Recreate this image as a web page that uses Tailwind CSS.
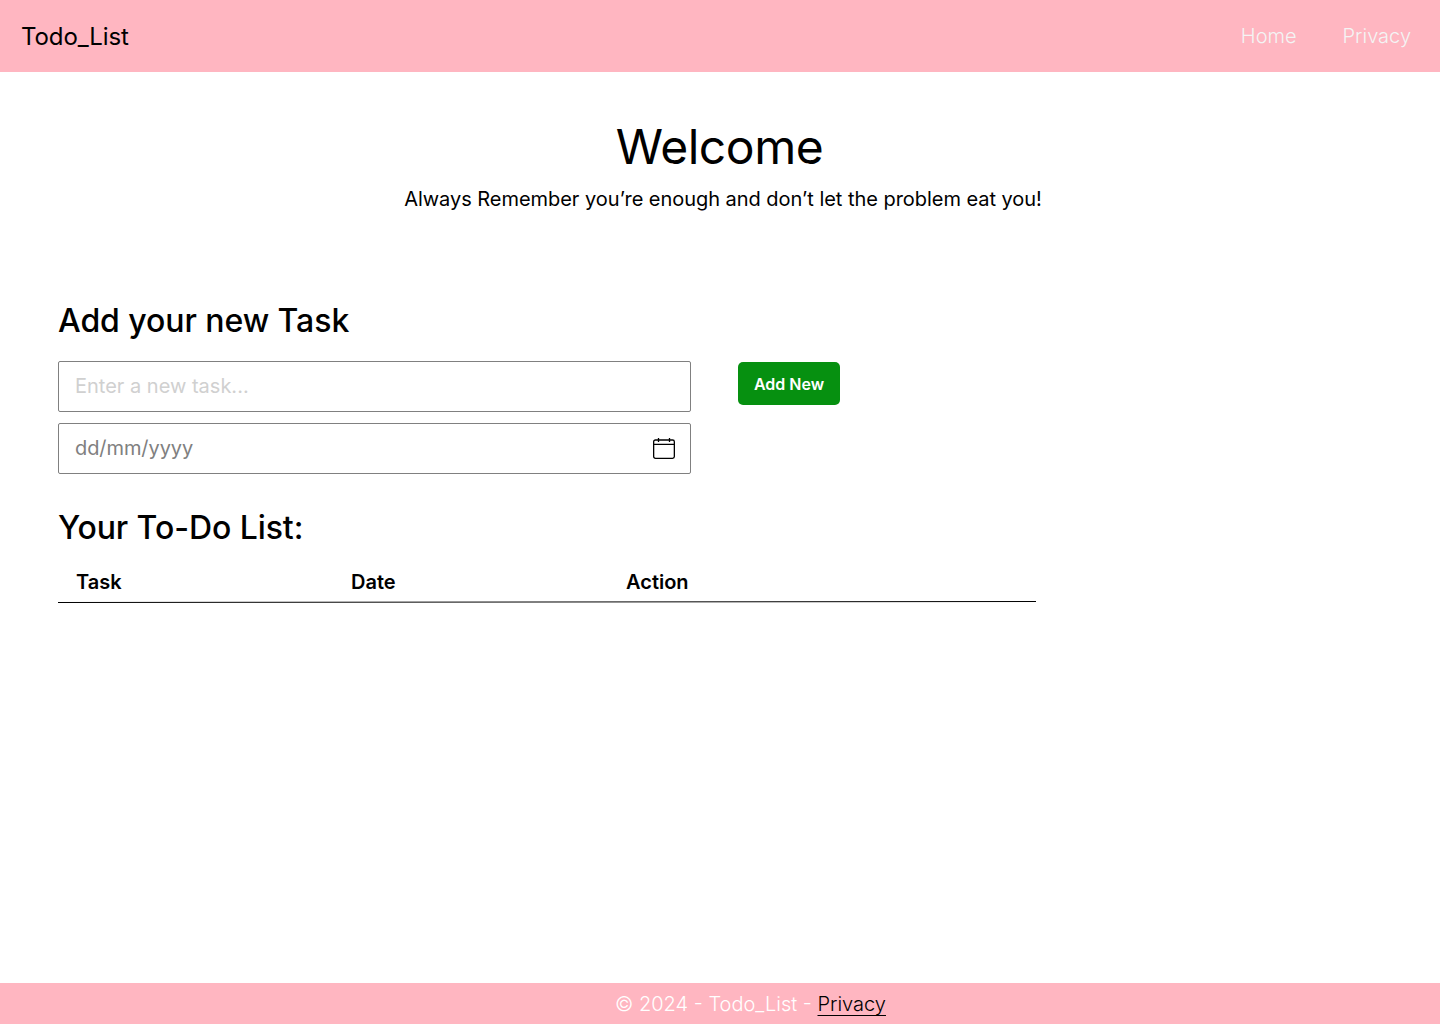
<!DOCTYPE html>
<html lang="en">
<head>
<meta charset="utf-8">
<title>Todo_List</title>
<script src="https://cdn.jsdelivr.net/npm/@tailwindcss/browser@4"></script>
</head>
<body class="flex h-screen flex-col overflow-hidden bg-white font-['Inter',sans-serif] text-black">
  <header class="flex h-[72px] shrink-0 items-center justify-between bg-[#ffb6c1] pr-[29px] pl-[21px]">
    <div class="pt-0.5 text-2xl tracking-[-0.1px]">Todo_List</div>
    <nav class="flex gap-[46px] text-xl font-light text-[#f4f4f4]">
      <a>Home</a>
      <a>Privacy</a>
    </nav>
  </header>
  <main class="flex grow flex-col pl-[58px]">
    <section class="mr-[52px] flex flex-col items-center pt-[46px]">
      <h1 class="mr-[7px] text-5xl leading-[58px] tracking-[-0.45px]">Welcome</h1>
      <p class="mt-[11px] text-xl leading-6 tracking-[-0.04px]">Always Remember you’re enough and don’t let the problem eat you!</p>
    </section>
    <h2 class="mt-[90px] text-[32px] leading-[39px] font-medium tracking-[-0.06px]">Add your new Task</h2>
    <div class="mt-[21px] flex items-start gap-[47px]">
      <div class="flex w-[633px] flex-col gap-[11px]">
        <div class="flex h-[51px] items-center rounded-xs border border-[#808080] px-4 pb-0.5 text-xl text-[#d0d0d0]">Enter a new task...</div>
        <div class="flex h-[51px] items-center justify-between rounded-xs border border-[#808080] pr-[15px] pb-0.5 pl-4 text-xl text-[#808080]">
          <span class="tracking-[-0.08px]">dd/mm/yyyy</span>
          <svg class="mt-0.5 shrink-0" width="22" height="22" viewBox="0 0 22 22" fill="none" stroke="black" stroke-width="1.3"><rect x=".65" y="2" width="20.7" height="18.4" rx="1.8"/><path d="M.65 6.3h20.7M5.5 0v4M16.5 0v4"/></svg>
        </div>
      </div>
      <button class="mt-px h-[43px] w-[102px] rounded-[5px] bg-[#069010] text-base font-semibold text-white">Add New</button>
    </div>
    <h2 class="mt-[34px] text-[32px] leading-[39px] font-medium tracking-[-0.07px]">Your To-Do List:</h2>
    <div class="mt-[23px] grid w-[978px] grid-cols-[275px_275px_1fr] pl-[18px] text-xl leading-6 font-semibold">
      <span>Task</span><span>Date</span><span>Action</span>
    </div>
    <svg class="mt-[6px]" width="978" height="4" viewBox="0 0 978 4"><path d="M0 2.5L978 1.5" stroke="black"/></svg>
  </main>
  <footer class="flex h-[41px] shrink-0 items-center justify-center bg-[#ffb6c1] pl-[61px] text-xl font-light text-white">
    <span class="whitespace-pre">© 2024 - Todo_List - <a class="text-black underline decoration-1 underline-offset-4 [text-decoration-skip-ink:none]">Privacy</a></span>
  </footer>
</body>
</html>
